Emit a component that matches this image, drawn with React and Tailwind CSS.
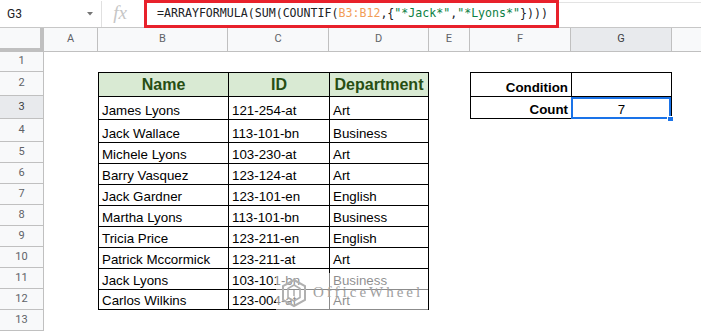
import React from 'react';

const cols = [
  { k: 'A', w: 'w-[54px]' },
  { k: 'B', w: 'w-[130px]' },
  { k: 'C', w: 'w-[101px]' },
  { k: 'D', w: 'w-[100px]' },
  { k: 'E', w: 'w-[41px]' },
  { k: 'F', w: 'w-[101px]' },
  { k: 'G', w: 'w-[101px]' },
  { k: 'H', w: 'w-[30px]' },
];

const heights = [
  'h-[20px]', 'h-[24px]', 'h-[23px]', 'h-[23px]', 'h-[21px]', 'h-[21px]', 'h-[21px]',
  'h-[21px]', 'h-[21px]', 'h-[21px]', 'h-[21px]', 'h-[21px]', 'h-[21px]',
];

const people = [
  ['James Lyons', '121-254-at', 'Art'],
  ['Jack Wallace', '113-101-bn', 'Business'],
  ['Michele Lyons', '103-230-at', 'Art'],
  ['Barry Vasquez', '123-124-at', 'Art'],
  ['Jack Gardner', '123-101-en', 'English'],
  ['Martha Lyons', '113-101-bn', 'Business'],
  ['Tricia Price', '123-211-en', 'English'],
  ['Patrick Mccormick', '123-211-at', 'Art'],
  ['Jack Lyons', '103-101-bn', 'Business'],
  ['Carlos Wilkins', '123-004-at', 'Art'],
];

function Cell({ w, className = '', children }) {
  return (
    <div className={`${w} shrink-0 h-full flex items-end pb-[1px] leading-[15px] ${className}`}>
      {children}
    </div>
  );
}

function tableEdge(row, last, endRow) {
  let c = 'border-black border-l border-t';
  if (last) c += ' border-r';
  if (row === endRow) c += ' border-b';
  return c;
}

function cellContent(row, k) {
  // main table B2:D12
  if (row >= 2 && row <= 12 && (k === 'B' || k === 'C' || k === 'D')) {
    const edge = tableEdge(row, k === 'D', 12);
    if (row === 2) {
      const label = { B: 'Name', C: 'ID', D: 'Department' }[k];
      return {
        className: `${edge} bg-[#d9ead3] justify-center font-bold text-[16px] leading-[18px] pb-[2px] text-[#274e13]`,
        children: label,
      };
    }
    const p = people[row - 3];
    const v = { B: p[0], C: p[1], D: p[2] }[k];
    return { className: `${edge} pl-[3px]`, children: v };
  }
  // condition table F2:G3
  if ((row === 2 || row === 3) && (k === 'F' || k === 'G')) {
    const edge = tableEdge(row, k === 'G', 3);
    if (k === 'F') {
      return {
        className: `${edge} justify-end pr-[3px] font-bold`,
        children: row === 2 ? 'Condition' : 'Count',
      };
    }
    if (row === 3) {
      return {
        className: `${edge} justify-center relative`,
        children: (
          <>
            7
            <div className="absolute -left-[1px] top-0 right-0 -bottom-[1px] border-2 border-[#1a73e8]" />
            <div className="absolute -right-[3px] -bottom-[4px] w-[7px] h-[6px] bg-[#1a73e8] border border-white" />
          </>
        ),
      };
    }
    return { className: edge, children: null };
  }
  return { className: '', children: null };
}

function Watermark() {
  return (
    <div className="absolute left-[276px] top-[273px] w-[152px] h-[39px] bg-white/55 flex items-center gap-[5px] pl-[4px]">
      <svg width="28" height="30" viewBox="0 0 28 30" fill="none" stroke="#b0b0b0" strokeWidth="2">
        <polygon points="14,2 25,8 25,22 14,28 3,22 3,8" />
        <polyline points="14,7 20,10.5 20,19.5 14,23 8,19.5 8,10.5 14,7" strokeWidth="1.6" />
        <line x1="14" y1="12" x2="14" y2="18" strokeWidth="1.6" />
      </svg>
      <span className="font-['Liberation_Serif',serif] text-[15px] tracking-[3px] text-[#a0a0a0] leading-none">
        OfficeWheel
      </span>
    </div>
  );
}

export default function App() {
  return (
    <div className="relative w-[701px] h-[332px] overflow-hidden bg-white font-['Liberation_Sans',Arial,sans-serif] text-[13.33px] text-black">
      {/* formula bar */}
      <div className="h-[28px] flex items-start border-b border-[#c7c7c7] bg-white">
        <div className="w-[102px] h-[26px] mt-[1px] flex items-center justify-between pl-[7px] pr-[8px] border-r border-[#e0e0e0] font-['Roboto',sans-serif] text-[12px] text-[#202124]">
          <span>G3</span>
          <svg width="6" height="4" viewBox="0 0 6 4">
            <path d="M0 0 L6 0 L3 3.5 Z" fill="#757575" />
          </svg>
        </div>
        <div className="w-[42px] h-[27px] flex items-center justify-center font-['Liberation_Serif',serif] italic text-[19px] text-[#c6c6c6] pr-[6px]">
          fx
        </div>
        <div className="w-[415px] h-[28px] border-[3px] border-[#e8212b] flex items-center pl-[10px] font-['DejaVu_Sans_Mono',monospace] text-[11.6px] text-[#202124] whitespace-pre">
          <span>=ARRAYFORMULA(SUM(COUNTIF(</span>
          <span className="text-[#f29d57]">B3:B12</span>
          <span>,{'{'}</span>
          <span className="text-[#0b8043]">"*Jack*"</span>
          <span>,</span>
          <span className="text-[#0b8043]">"*Lyons*"</span>
          <span>{'})))'}</span>
        </div>
        <div className="flex-1 mt-[2px] border-t border-[#e3e3e3]" />
      </div>

      {/* column headers */}
      <div className="h-[24px] flex font-['Roboto',sans-serif] text-[11px] text-[#5f6368]">
        <div className="w-[44px] shrink-0 bg-[#f8f9fa] border-r-4 border-b-4 border-[#c0c0c0]" />
        {cols.map((c) => (
          <div
            key={c.k}
            className={`${c.w} shrink-0 flex items-center justify-center border-r border-b border-[#c0c0c0] ${
              c.k === 'G' ? 'bg-[#e8eaed] text-[#3c4043]' : 'bg-[#f8f9fa]'
            }`}
          >
            {c.k === 'H' ? null : c.k}
          </div>
        ))}
      </div>

      {/* rows */}
      {heights.map((h, i) => {
        const row = i + 1;
        return (
          <div key={row} className={`${h} flex`}>
            <div
              className={`w-[44px] shrink-0 flex items-center justify-center border-r border-b border-[#c0c0c0] font-['Roboto',sans-serif] text-[11px] ${
                row === 3 ? 'bg-[#e8eaed] text-[#3c4043]' : 'bg-[#f8f9fa] text-[#5f6368]'
              }`}
            >
              {row}
            </div>
            {cols.map((c) => {
              const { className, children } = cellContent(row, c.k);
              return (
                <Cell key={c.k} w={c.w} className={className}>
                  {children}
                </Cell>
              );
            })}
          </div>
        );
      })}

      <Watermark />
    </div>
  );
}
